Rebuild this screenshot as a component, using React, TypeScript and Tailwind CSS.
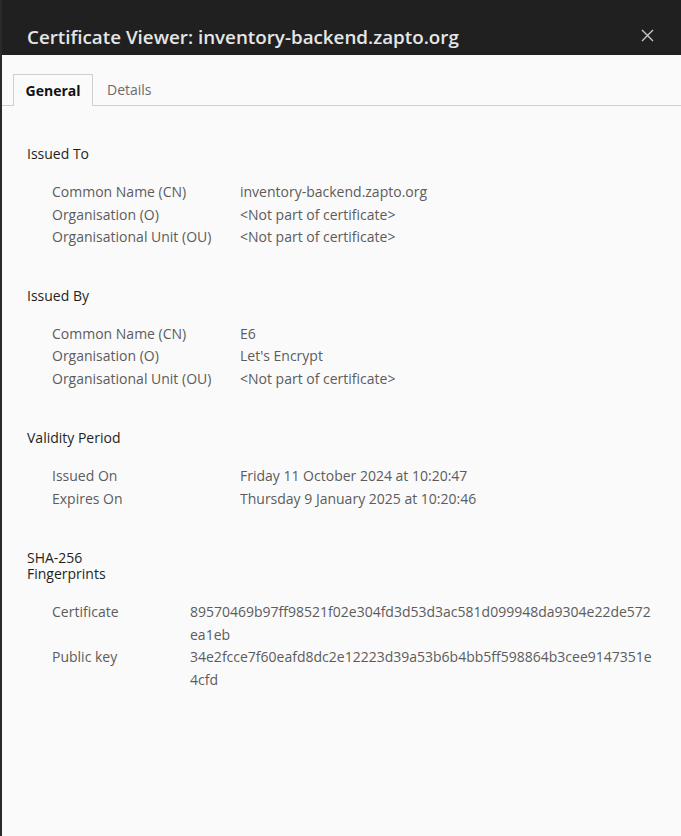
import React from "react";

const font = { fontFamily: '"Open Sans", "Noto Sans", sans-serif' };

function Row({ label, value, labelW = "w-[188px]" }: { label: string; value: React.ReactNode; labelW?: string }) {
  return (
    <div className="flex text-[14px] leading-[22.5px] text-[#5c5c5c]">
      <div className={`${labelW} shrink-0`}>{label}</div>
      <div>{value}</div>
    </div>
  );
}

function Section({ title, children, className = "" }: { title: React.ReactNode; children: React.ReactNode; className?: string }) {
  return (
    <div className={className}>
      <div className="text-[14px] leading-[15px] text-[#1f1f1f]">{title}</div>
      <div className="mt-[20px] pl-[25px]">{children}</div>
    </div>
  );
}

export default function App() {
  return (
    <div className="w-[681px] h-[836px] bg-[#fafafa] border-l-2 border-[#2a2a2a] flex flex-col overflow-hidden" style={font}>
      <div className="h-[55px] bg-[#202020] flex items-end justify-between pl-[25px] pr-[27px] pb-[3px] shrink-0">
        <div className="text-[18.8px] font-semibold text-[#e6e6e6] leading-[30px]">
          Certificate Viewer: inventory-backend.zapto.org
        </div>
        <svg width="13" height="13" viewBox="0 0 13 13" className="mb-[10px]">
          <path d="M1 1 L12 12 M12 1 L1 12" stroke="#c8c8c8" strokeWidth="1.4" />
        </svg>
      </div>
      <div className="mt-[19px] flex items-end border-b border-[#cfcfcf] h-[32px] pl-[11px]">
        <div className="h-[32px] w-[80px] border border-b-0 border-[#cfcfcf] bg-[#fafafa] -mb-px flex items-center justify-center text-[14px] font-bold text-[#111]">
          General
        </div>
        <div className="h-[31px] px-[14px] flex items-center text-[14px] text-[#6b6b6b]">Details</div>
      </div>
      <div className="pl-[25px] pt-[40px]">
        <Section title="Issued To">
          <Row label="Common Name (CN)" value="inventory-backend.zapto.org" />
          <Row label="Organisation (O)" value="<Not part of certificate>" />
          <Row label="Organisational Unit (OU)" value="<Not part of certificate>" />
        </Section>
        <Section title="Issued By" className="mt-[39px]">
          <Row label="Common Name (CN)" value="E6" />
          <Row label="Organisation (O)" value="Let's Encrypt" />
          <Row label="Organisational Unit (OU)" value="<Not part of certificate>" />
        </Section>
        <Section title="Validity Period" className="mt-[40px]">
          <Row label="Issued On" value="Friday 11 October 2024 at 10:20:47" />
          <Row label="Expires On" value="Thursday 9 January 2025 at 10:20:46" />
        </Section>
        <Section
          title={
            <div className="-my-[0.5px] leading-[16px]">
              SHA-256
              <br />
              Fingerprints
            </div>
          }
          className="mt-[40px]"
        >
          <Row
            labelW="w-[138px]"
            label="Certificate"
            value={<><span className="block">89570469b97ff98521f02e304fd3d53d3ac581d099948da9304e22de572</span><span className="block">ea1eb</span></>}
          />
          <Row
            labelW="w-[138px]"
            label="Public key"
            value={<><span className="block">34e2fcce7f60eafd8dc2e12223d39a53b6b4bb5ff598864b3cee9147351e</span><span className="block">4cfd</span></>}
          />
        </Section>
      </div>
    </div>
  );
}
